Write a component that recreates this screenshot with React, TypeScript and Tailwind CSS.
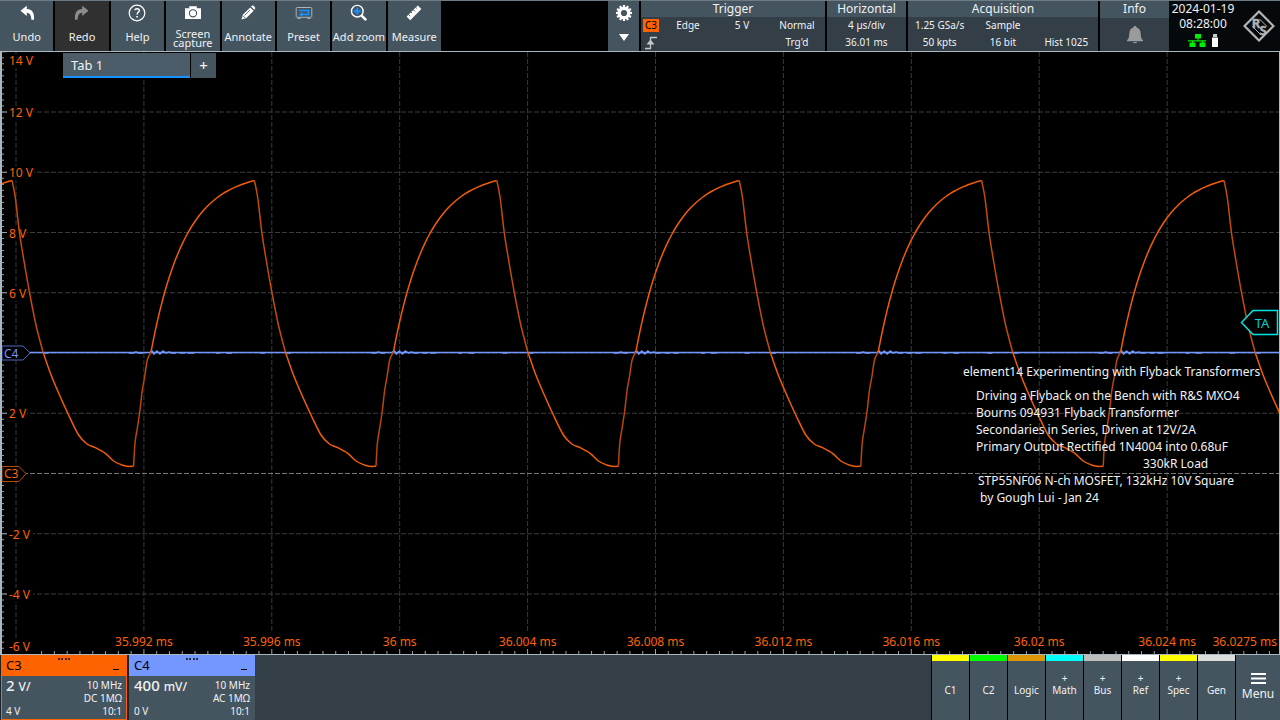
import type { ReactNode } from 'react'
import clsx from 'clsx'

const ORANGE = '#ff6200'
const BLUE = '#7396ff'

// ---------- plot data ----------

const X_START = 16
const X_STEP = 127.9
const Y_ZERO = 473.5
const Y_STEP = 60.25
const PERIOD = 242.4
const FIRST_PEAK = 12

// one period of the C3 trace, x is relative to the peak
const FALL = [[0, 180.5], [3.3, 197.5], [7.5, 233], [12.5, 264], [17.6, 293], [24, 325], [31, 352]]
const TAIL = [[31, 352], [38.3, 373], [46.6, 393], [56.6, 415], [66.6, 435], [75, 444], [83.3, 447.7], [93.3, 453.3], [101.6, 461], [110, 465], [115, 466.3], [121.6, 466.3]]
const RISE = [[121.6, 466.3], [123, 443], [125.5, 427], [128, 410], [130.3, 390], [132.8, 376], [135.3, 360], [139, 352]]
// the output cap charges exponentially
const CHARGE = Array.from({ length: 24 }, (_, i) => {
  const t = (i / 23) * (PERIOD - 139)
  return [139 + t, 172 + 180 * Math.exp(-t / 34)]
})

const TIMES = ['35.992 ms', '35.996 ms', '36 ms', '36.004 ms', '36.008 ms', '36.012 ms', '36.016 ms', '36.02 ms', '36.024 ms']

function smooth(points: number[][], dx: number) {
  const p = points.map(([x, y]) => [x + dx, y])
  let d = `M${p[0][0]} ${p[0][1]}`
  for (let i = 0; i < p.length - 1; i++) {
    const a = p[i - 1] ?? p[i]
    const b = p[i]
    const c = p[i + 1]
    const e = p[i + 2] ?? c
    d += `C${b[0] + (c[0] - a[0]) / 6} ${b[1] + (c[1] - a[1]) / 6} ${c[0] - (e[0] - b[0]) / 6} ${c[1] - (e[1] - b[1]) / 6} ${c[0]} ${c[1]}`
  }
  return d
}

// C4 sits at zero with a little ringing after each switching edge
function noise(dx: number) {
  return `M${dx - 22} 353h4l3-1 3 1h4m7-1l2-1 2 3 3-3 3 3 3-3 3 2 3-1 3 1h4m4 0h5m3 0h6m22 0h4m6 0h6m28 0h5m22 0h4`
}

function Axis() {
  const rows = [6, 5, 4, 3, 2, 1, 0, -1, -2]
  return (
    <g>
      {Array.from({ length: 10 }, (_, i) => (
        <line key={i} x1={X_START + i * X_STEP} x2={X_START + i * X_STEP} y1={52} y2={i === 0 ? 640 : 633} stroke="#393939" strokeDasharray="5 2" />
      ))}
      {rows.map(r => (
        <line key={r} x1={2} x2={1279} y1={Y_ZERO - r * Y_STEP} y2={Y_ZERO - r * Y_STEP} stroke={r === 0 ? '#777' : '#3c3c3c'} strokeDasharray="5 2" />
      ))}
      {/* ticks */}
      {Array.from({ length: 100 }, (_, i) => {
        const y = Y_ZERO + (29 - i) * 6.025
        return <line key={i} x1={2} x2={(i - 29) % 10 === 0 ? 7 : 4} y1={y} y2={y} stroke="#9aa5ac" />
      })}
      {Array.from({ length: 99 }, (_, i) => {
        const x = X_START + i * (X_STEP / 10)
        return <line key={i} x1={x} x2={x} y1={654} y2={i % 10 === 0 ? 648 : 651} stroke="#9aa5ac" />
      })}
    </g>
  )
}

function Label({ x, y, w, children, anchor = 'start' }: { x: number; y: number; w: number; children: string; anchor?: 'start' | 'middle' | 'end' }) {
  const left = anchor === 'middle' ? x - w / 2 : anchor === 'end' ? x - w : x
  return (
    <g>
      <rect x={left - 1} y={y - 11} width={w + 2} height={14} fill="#000" />
      <text x={x} y={y} textAnchor={anchor} fill={ORANGE} fontSize={12}>{children}</text>
    </g>
  )
}

function Plot() {
  const volts = [12, 10, 8, 6, 2, -2, -4]
  const periods = [-1, 0, 1, 2, 3, 4, 5]
  return (
    <svg viewBox="2 52 1277 602" className="block w-full h-auto" role="img" aria-label="Waveform">
      <Axis />
      <Label x={9} y={65} w={24}>14 V</Label>
      {volts.map(v => (
        <Label key={v} x={9} y={Y_ZERO - (v / 2) * Y_STEP + 5} w={v > 9 ? 24 : v < 0 ? 23 : 17}>{`${v} V`}</Label>
      ))}
      <Label x={9} y={651} w={23}>-6 V</Label>
      {TIMES.map((t, i) => (
        <Label key={t} x={X_START + (i + 1) * X_STEP} y={646} w={58} anchor="middle">{t}</Label>
      ))}
      <Label x={1277} y={646} w={64} anchor="end">36.0275 ms</Label>

      <path d="M2 352.5H1279" stroke={BLUE} strokeWidth={1.5} />
      {periods.map(n => (
        <path key={n} d={noise(FIRST_PEAK + n * PERIOD + 139)} stroke={BLUE} strokeWidth={1.5} fill="none" />
      ))}
      {periods.map(n => {
        const dx = FIRST_PEAK + n * PERIOD
        return (
          <g key={n} fill="none" strokeWidth={1.5} strokeLinejoin="round">
            <path d={smooth(FALL, dx)} stroke="#c44d04" />
            <path d={smooth(TAIL, dx)} stroke="#f05d04" />
            <path d={smooth(RISE, dx)} stroke="#b84804" />
            <path d={smooth(CHARGE, dx)} stroke="#f05d04" />
          </g>
        )
      })}

      {/* channel markers */}
      <path d="M2 346H23L30 353L23 360H2Z" fill="#000" stroke="#4d69bd" />
      <text x={4} y={358} fontSize={12} fill={BLUE}>C4</text>
      <path d="M2 466.5H19L26 473.7L19 481.5H2Z" fill="#000" stroke="#b84804" />
      <text x={4} y={478} fontSize={12} fill={ORANGE}>C3</text>
      <path d="M1241.5 322.5L1253 310.5H1277.5V334.5H1253Z" fill="#000" stroke="#00e5e5" strokeWidth={1.5} />
      <text x={1262} y={328} fontSize={13} textAnchor="middle" fill="#00d0d0">TA</text>
    </svg>
  )
}

// ---------- icons ----------

function Icon({ children, className }: { children: ReactNode; className?: string }) {
  return <svg viewBox="0 0 24 24" className={clsx('size-6', className)} fill="none" aria-hidden="true">{children}</svg>
}

const undoPath = 'M5.5 9.7L11.8 4.8V8C17 8 19.6 11.6 19 18.8H16.4C16.2 14 14.6 11.8 11.8 11.7V14.9Z'

const icons = {
  undo: <Icon><path d={undoPath} fill="#fff" /></Icon>,
  redo: <Icon className="-scale-x-100"><path d={undoPath} fill="#8c8c8c" /></Icon>,
  help: (
    <Icon>
      <circle cx="12" cy="12" r="7.8" stroke="#fff" strokeWidth="1.2" />
      <path d="M9.8 9.2C10.2 7.2 14.3 7.1 14.3 9.6C14.3 11.3 12.1 11.4 12.1 13.4" stroke="#fff" strokeWidth="1.4" />
      <path d="M11.3 14.9h1.6v1.6h-1.6z" fill="#fff" />
    </Icon>
  ),
  camera: (
    <Icon>
      <path d="M4 7.2h4.200V5.200h7.600v2H20V18H4z" fill="#fff" />
      <circle cx="12" cy="12.3" r="3.6" stroke="#455560" strokeWidth="1.1" />
    </Icon>
  ),
  pencil: (
    <Icon>
      <path d="M5.500 18.600L7 13.600L14.200 6.400L17.600 9.800L10.400 17Z" fill="#fff" />
      <path d="M15.100 5.500L16.200 4.600C17.400 4.300 19.400 6.200 19.200 7.600L18.400 8.800Z" fill="#fff" />
      <path d="M8.500 14.500L13.800 9.200M7.200 15.200L9 16.800" stroke="#455560" strokeWidth="0.8" />
    </Icon>
  ),
  preset: (
    <Icon>
      <rect x="4.2" y="6.5" width="15.6" height="9.8" rx="1" stroke="#a9b3b9" />
      <path d="M5.500 17.500h3M15.500 17.500h3" stroke="#a9b3b9" />
      <path d="M7 9.500h9.500v4H9.800" stroke="#1691ff" strokeWidth="1.6" />
      <path d="M10.500 10.800v5.400L7 13.500z" fill="#1691ff" />
    </Icon>
  ),
  zoom: (
    <Icon>
      <circle cx="10.3" cy="10.2" r="5.8" stroke="#fff" strokeWidth="1.4" />
      <path d="M14.600 14.600L19.200 19.200" stroke="#fff" strokeWidth="2.6" />
      <path d="M10.300 6.800v6.800M6.900 10.200h6.800" stroke="#1691ff" strokeWidth="2" />
    </Icon>
  ),
  ruler: (
    <Icon>
      <path d="M4.600 15.600L15.800 4.400L19.400 8L8.200 19.200Z" fill="#fff" />
      <path d="M6.200 13.200l2 2M8.600 10.800l1.400 1.400M11 8.400l2 2M13.400 6l1.400 1.400" stroke="#455560" strokeWidth="1" />
    </Icon>
  ),
}

function Gear() {
  return (
    <svg viewBox="0 0 18 18" className="size-[18px]" aria-hidden="true">
      {Array.from({ length: 12 }, (_, i) => (
        <rect key={i} x="7.9" y="1" width="2.2" height="4" fill="#fff" transform={`rotate(${i * 30} 9 9)`} />
      ))}
      <circle cx="9" cy="9" r="4.7" fill="none" stroke="#fff" strokeWidth="3.2" />
    </svg>
  )
}

function Bell() {
  return (
    <svg viewBox="0 0 18 20" className="h-5 w-[18px]" fill="#9b9b9b" aria-hidden="true">
      <path d="M9 1C10 1 10.6 1.7 10.6 2.6C13.4 3.4 14.6 5.5 14.7 8.5C14.8 12.5 15.5 14 17 15.2V16.2H1V15.2C2.5 14 3.2 12.5 3.3 8.5C3.4 5.5 4.6 3.4 7.4 2.6C7.4 1.7 8 1 9 1Z" />
      <path d="M7 17H11C11 18.6 7 18.6 7 17Z" />
    </svg>
  )
}

function Logo() {
  return (
    <svg viewBox="0 0 32 32" className="size-8" aria-hidden="true">
      <path d="M16 1.500L30.500 16L16 30.500L1.500 16Z" fill="none" stroke="#b4b4b4" strokeWidth="2.2" />
      <g fill="#b4b4b4" stroke="#b4b4b4" strokeWidth="0.4" fontSize={13} fontWeight={700} textAnchor="middle">
        <text x={13} y={17.5}>R</text>
        <text x={20} y={24.5}>S</text>
      </g>
      <path d="M9.500 16.500L17.500 24.500M16.500 9L24 16.500" stroke="#b4b4b4" strokeWidth="1" />
    </svg>
  )
}

// ---------- header ----------

const tools = [
  { label: 'Undo', icon: icons.undo },
  { label: 'Redo', icon: icons.redo, disabled: true },
  { label: 'Help', icon: icons.help },
  { label: 'Screen capture', icon: icons.camera },
  { label: 'Annotate', icon: icons.pencil },
  { label: 'Preset', icon: icons.preset },
  { label: 'Add zoom', icon: icons.zoom },
  { label: 'Measure', icon: icons.ruler },
]

function Panel({ title, className, children }: { title: string; className?: string; children: ReactNode }) {
  return (
    <section className={clsx('flex flex-col bg-[#333e47]', className)}>
      <h2 className="h-[17px] bg-[#455560] text-center text-[12px] leading-4">{title}</h2>
      <div className="flex-1 text-[10px] leading-[17px]">{children}</div>
    </section>
  )
}

function Header() {
  return (
    <header className="flex h-[51px] justify-between border-t border-[#6d7b84] bg-black">
      <nav className="grid w-[441px] grid-cols-8 gap-0.5">
        {tools.map(t => (
          <button
            key={t.label}
            disabled={t.disabled}
            className={clsx('flex flex-col items-center whitespace-nowrap text-[11px]', t.disabled ? 'bg-[#303030]' : 'bg-[#455560]')}
          >
            {t.icon}
            {t.label.startsWith('Screen') ? (
              <span className="whitespace-normal leading-[9px] pt-1">{t.label}</span>
            ) : (
              <span className="mt-1 leading-4">{t.label}</span>
            )}
          </button>
        ))}
      </nav>

      <div className="flex gap-0.5">
        <button aria-label="Settings" className="flex w-[31px] flex-col items-center gap-3 bg-[#455560] pt-[3px]">
          <Gear />
          <svg viewBox="0 0 10 7" className="h-[7px] w-2.5" aria-hidden="true"><path d="M0 0h10L5 7z" fill="#fff" /></svg>
        </button>

        <Panel title="Trigger" className="w-[184px]">
          <div className="grid grid-cols-[20px_54px_54px_56px] text-center">
            <span className="mt-0.5 ml-0.5 h-[13px] w-4 bg-[#ff6200] text-[10px] leading-[13px] text-black">C3</span>
            <span>Edge</span>
            <span>5 V</span>
            <span>Normal</span>
            <svg viewBox="0 0 14 14" className="mt-0.5 ml-[3px] h-3.5 w-3.5" fill="none" aria-hidden="true">
              <path d="M1 12.500H6.500V1.500H13" stroke="#c4c9cc" strokeWidth="1.3" />
              <path d="M6.500 3.500L10.500 8.500H2.500Z" fill="#c4c9cc" />
            </svg>
            <span className="col-start-4">Trg'd</span>
          </div>
        </Panel>

        <Panel title="Horizontal" className="w-[79px]">
          <p className="text-center">4 µs/div</p>
          <p className="text-center">36.01 ms</p>
        </Panel>

        <Panel title="Acquisition" className="w-[190px]">
          <div className="grid grid-cols-3 text-center">
            <span>1.25 GSa/s</span>
            <span>Sample</span>
            <span />
            <span>50 kpts</span>
            <span>16 bit</span>
            <span>Hist 1025</span>
          </div>
        </Panel>

        <div className="flex">
          <Panel title="Info" className="w-[69px]">
            <div className="flex justify-center pt-[7px]"><Bell /></div>
          </Panel>
          <div className="flex w-[111px] items-center justify-between bg-[#06090c] pr-[5px]">
            <div className="flex h-full w-[68px] flex-col items-center text-[12px] leading-[15px]">
              <time className="whitespace-nowrap">2024-01-19</time>
              <time>08:28:00</time>
              <svg viewBox="0 0 30 14" className="mt-[3px] h-3.5 w-[30px]" aria-hidden="true">
                <path d="M7 0h6v4.500H7zM1.500 8.500h6V13h-6zM11.500 8.500h6V13h-6zM9.500 4.500h1v2.200h-1zM0 6.200h18v1.200H0zM4 7h1v2H4zM14 7h1v2h-1z" fill="#00f000" />
                <path d="M25 0h4v3h-4z" fill="#ccc" />
                <path d="M24 3.500h6V13h-6z" fill="#fff" />
              </svg>
            </div>
            <Logo />
          </div>
        </div>
      </div>
    </header>
  )
}

// ---------- overlays on the plot ----------

const notes = [
  { text: 'element14 Experimenting with Flyback Transformers', className: 'mb-[7px]' },
  { text: 'Driving a Flyback on the Bench with R&S MXO4', className: 'pl-[13px]' },
  { text: 'Bourns 094931 Flyback Transformer', className: 'pl-[13px]' },
  { text: 'Secondaries in Series, Driven at 12V/2A', className: 'pl-[13px]' },
  { text: 'Primary Output Rectified 1N4004 into 0.68uF', className: 'pl-[13px]' },
  { text: '330kR Load', className: 'pl-[180px]' },
  { text: 'STP55NF06 N-ch MOSFET, 132kHz 10V Square', className: 'pl-[15px]' },
  { text: 'by Gough Lui - Jan 24', className: 'pl-[17px]' },
]

// ---------- footer ----------

type Channel = { name: string; scale: string; unit: string; coupling: string; offset: string; active?: boolean }

const channels: Channel[] = [
  { name: 'C3', scale: '2', unit: 'V/', coupling: 'DC 1MΩ', offset: '4 V', active: true },
  { name: 'C4', scale: '400', unit: 'mV/', coupling: 'AC 1MΩ', offset: '0 V' },
]

function ChannelCard({ name, scale, unit, coupling, offset, active }: Channel) {
  return (
    <section className={clsx('flex w-[126px] flex-col border bg-[#455560]', active ? 'border-[#ff6200]' : 'border-[#455560]')}>
      <div className={clsx('relative -mx-px -mt-px flex h-[21px] items-center justify-between px-[5px] text-black', active ? 'bg-[#ff6200]' : 'bg-[#7396ff]')}>
        <h3 className="text-[13px]">{name}</h3>
        <span className="absolute inset-x-0 top-[3px] mx-auto w-3 border-t-2 border-dotted border-black/70" />
        <button aria-label={`Minimize ${name}`} className="flex h-full w-3 items-end justify-center pb-1.5">
          <span className="h-px w-1.5 bg-black" />
        </button>
      </div>
      <div className="flex flex-1 justify-between px-1 pb-px text-[10px]">
        <div className="flex flex-col justify-between">
          <p className="text-[15px] leading-[18px] font-medium">{scale} <span className="text-[12px]">{unit}</span></p>
          <p className="leading-[13px]">{offset}</p>
        </div>
        <div className="flex flex-col justify-end text-right leading-[13px]">
          <p>10 MHz</p>
          <p>{coupling}</p>
          <p>10:1</p>
        </div>
      </div>
    </section>
  )
}

const sources = [
  { label: 'C1', bar: 'bg-[#ffff00]' },
  { label: 'C2', bar: 'bg-[#00ff00]' },
  { label: 'Logic', bar: 'bg-[#dc9600]' },
  { label: 'Math', bar: 'bg-[#00ffff]', add: true },
  { label: 'Bus', bar: 'bg-[#bebebe]', add: true },
  { label: 'Ref', bar: 'bg-white', add: true },
  { label: 'Spec', bar: 'bg-[#ffff00]', add: true },
  { label: 'Gen', bar: 'bg-[#dcdcdc]' },
]

function Footer() {
  return (
    <footer className="flex h-[65px] justify-between bg-[#333e47]">
      <div className="flex gap-0.5 bg-[#1c2329] pl-px">
        {channels.map(c => <ChannelCard key={c.name} {...c} />)}
      </div>
      <div className="flex gap-px bg-black pl-px">
        {sources.map(s => (
          <button key={s.label} className="flex w-[37px] flex-col items-center bg-[#455560] text-[10px] leading-3">
            <span className={clsx('h-1.5 w-full', s.bar)} />
            <span className="mt-[11px] h-3">{s.add && '+'}</span>
            <span>{s.label}</span>
          </button>
        ))}
        <button className="flex w-11 flex-col items-center bg-[#455560] pt-[18px] text-[12px] leading-4">
          <svg viewBox="0 0 15 11" className="h-[11px] w-[15px]" aria-hidden="true">
            <path d="M0 1h15M0 5.500h15M0 10h15" stroke="#fff" strokeWidth="1.8" />
          </svg>
          <span className="mt-0.5">Menu</span>
        </button>
      </div>
    </footer>
  )
}

export default function App() {
  return (
    <div className="flex min-h-screen flex-col bg-black font-['Noto_Sans',sans-serif] text-[#f0f2f3]">
      <Header />
      <main className="relative flex-1 border-y border-r border-l-2 border-[#a9b8c1]">
        <Plot />
        <div className="absolute top-px left-[61px] flex h-[25px] gap-px text-[13px]">
          <button className="w-[127px] border-b-2 border-[#1691ff] bg-[#4c5c68] px-2 text-left leading-5">Tab 1</button>
          <button aria-label="Add tab" className="w-[25px] bg-[#455560] text-[15px] font-medium">+</button>
        </div>
        <div className="absolute top-[311px] right-3 w-[304px] whitespace-nowrap text-[12px] leading-[17px]">
          {notes.map(n => <p key={n.text} className={n.className}>{n.text}</p>)}
        </div>
      </main>
      <Footer />
    </div>
  )
}
